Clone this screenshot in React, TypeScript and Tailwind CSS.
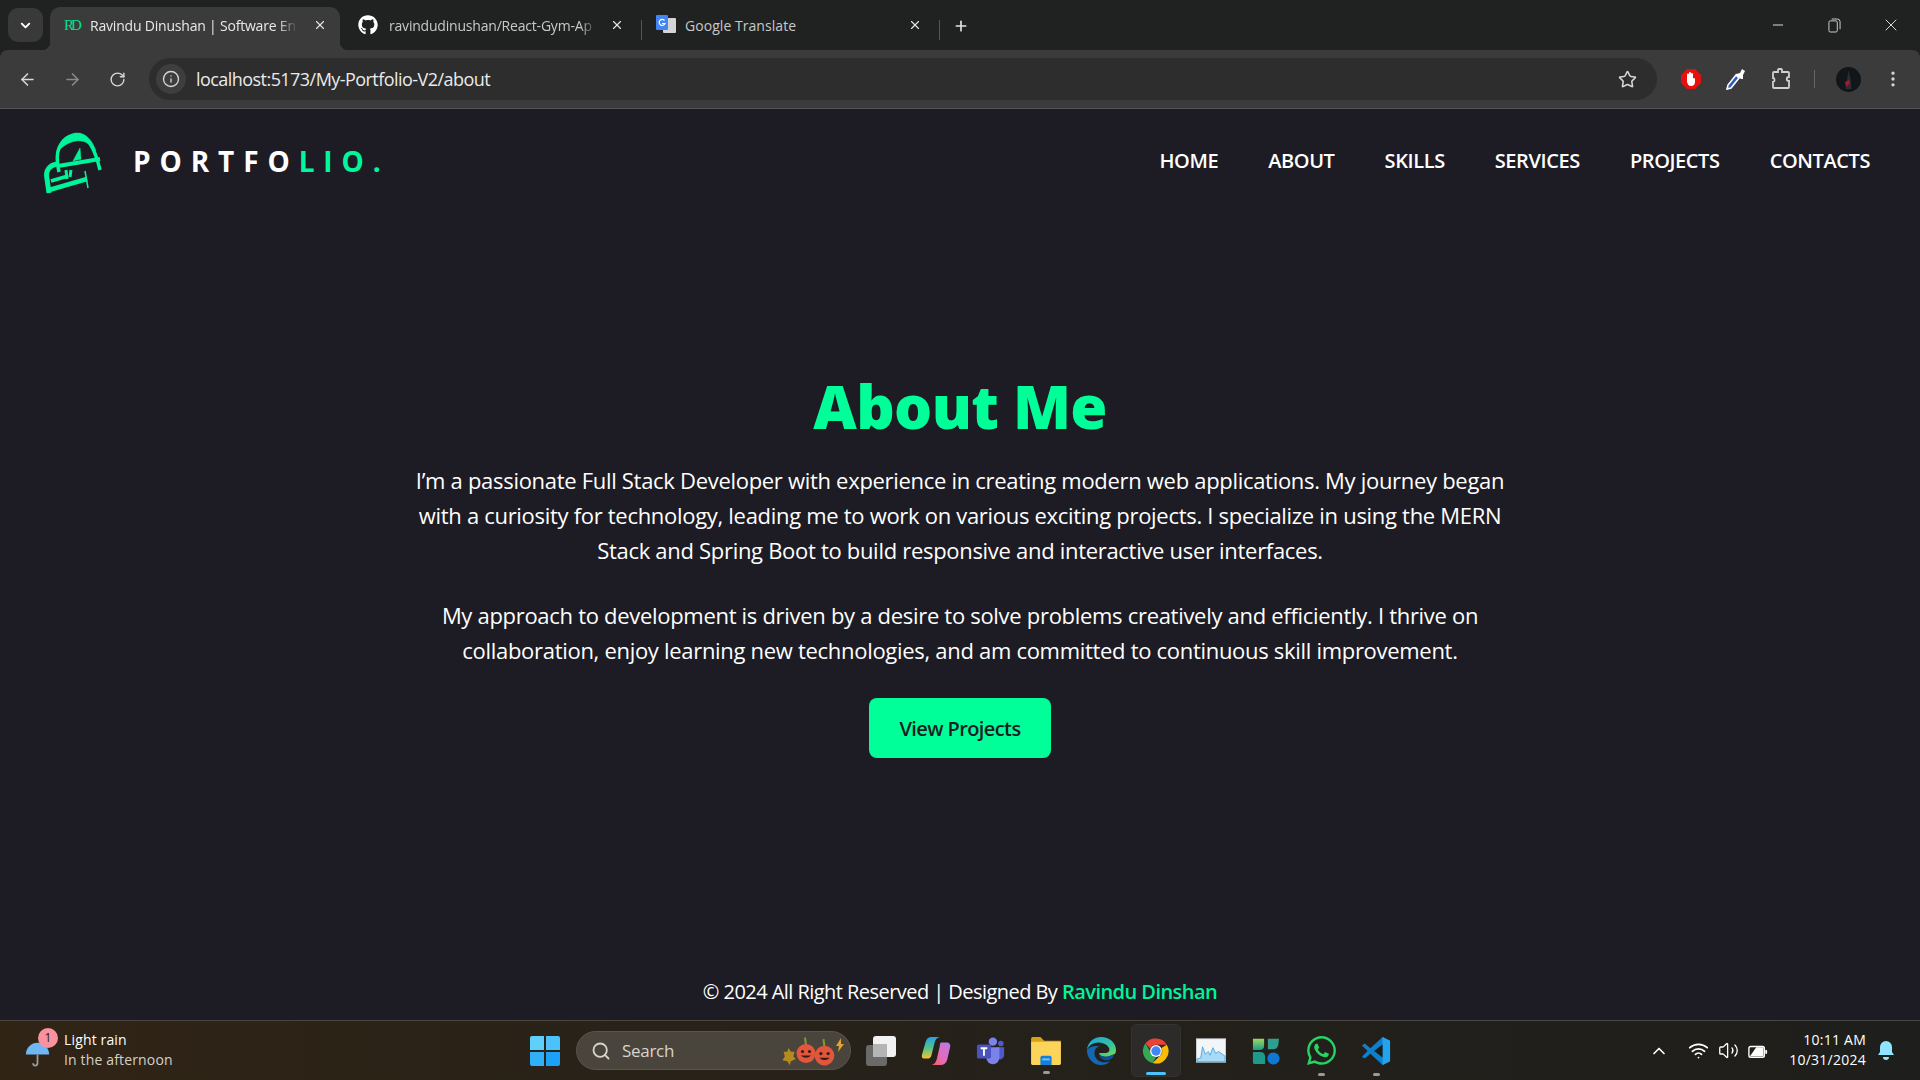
import { ArrowLeft, ArrowRight, ChevronDown, ChevronUp, EllipsisVertical, Info, Minus, Plus, RotateCw, Search, Star, Volume2, Wifi, X } from "lucide-react";
import { FaGithub, FaWhatsapp } from "react-icons/fa";

const navLinks = ["HOME", "ABOUT", "SKILLS", "SERVICES", "PROJECTS", "CONTACTS"];

function LogoMark() {
    return (
        <svg viewBox="0 0 90 85" className="w-[90px] h-[85px] translate-y-[2px]" fill="none" stroke="#00f59b" strokeLinecap="butt">
            <path d="M29 51C27 42 26 34 29 27C33 18 40 14 47 14C58 14 65 28 70 49" strokeWidth="3.500" />
            <path d="M28 30C32 18 40 12 47 12C56 12 62 19 66 30C59 21 52 19 46 20C39 21 33 25 28 30z" fill="#00f59b" strokeWidth="0.500" />
            <path d="M28 45L70 38" strokeWidth="4" />
            <path d="M50 27L51 38L43 40z" fill="#00f59b" strokeWidth="0.500" />
            <path d="M36 49L37 58M41 49L40 56" strokeWidth="3" />
            <path d="M27 43C20 44 15 49 17 58L19 72" strokeWidth="5" />
            <path d="M19 69L57 58" strokeWidth="4.500" />
            <path d="M21 60L38 55" strokeWidth="3.500" />
            <path d="M55 50L58 67" strokeWidth="1.500" />
        </svg>
    );
}

function ChromeIcon() {
    return (
        <svg viewBox="0 0 48 48" className="w-[30px] h-[30px]">
            <path d="M24 4a20 20 0 0 1 17.3 10H24a10 10 0 0 0-9.3 6.3L7.2 11.6A20 20 0 0 1 24 4z" fill="#ea4335" />
            <path d="M7.2 11.6l8.6 15A10 10 0 0 0 24 34l-5.3 9.3A20 20 0 0 1 7.2 11.6z" fill="#34a853" />
            <path d="M41.3 14A20 20 0 0 1 18.700 43.300L32.700 29A10 10 0 0 0 32.600 19z" fill="#fbbc04" />
            <circle cx="24" cy="24" r="9.500" fill="#fff" />
            <circle cx="24" cy="24" r="7.500" fill="#4285f4" />
        </svg>
    );
}

function EdgeIcon() {
    return (
        <svg viewBox="0 0 32 32" className="w-[30px] h-[30px]">
            <defs>
                <linearGradient id="edgeTop" x1="0" y1="0" x2="1" y2="1">
                    <stop offset="0" stopColor="#1aa5e0" />
                    <stop offset="0.6" stopColor="#35c1a0" />
                    <stop offset="1" stopColor="#7fdc4e" />
                </linearGradient>
            </defs>
            <path d="M16 1C8 1 1.500 7 1 15c2-5 7-8 12-8 7 0 12 4 12 8 0 2-2 3-4 3h-7c0 3 4 4 8 4 3 0 6-1 9-3 .7-1.500 1-3 1-4C32 7 25 1 16 1z" fill="url(#edgeTop)" />
            <path d="M1 15c-.3 8 6 16 15 16 4 0 7-1 10-4-2 1-4 1-6 1-7 0-11-5-11-10 0-3 2-6 5-7-6-1-11 1-13 4z" fill="#1468b3" />
            <path d="M14 18c0 5 4 8 8 8 2 0 3-.5 4-1 2-1 4-3 4-6-3 2-6 3-9 3-4 0-7-2-7-4z" fill="#0c4f94" />
        </svg>
    );
}

function TeamsIcon() {
    return (
        <svg viewBox="0 0 32 32" className="w-[30px] h-[30px]">
            <circle cx="18" cy="6" r="4.500" fill="#7b83eb" />
            <circle cx="26.500" cy="8" r="3" fill="#5059c9" />
            <path d="M22 12h8v9a5 5 0 0 1-8 3z" fill="#5059c9" />
            <path d="M11 12h14v11a7 7 0 0 1-14 0z" fill="#7b83eb" />
            <rect x="1" y="9" width="15" height="15" rx="2" fill="#4b53bc" />
            <path d="M5 13h7M8.500 13v8" stroke="#fff" strokeWidth="2" />
        </svg>
    );
}

function CopilotIcon() {
    return (
        <svg viewBox="0 0 32 32" className="w-[30px] h-[30px]">
            <defs>
                <linearGradient id="copilotLeft" x1="0" y1="0" x2="0" y2="1">
                    <stop offset="0" stopColor="#2a9ee8" />
                    <stop offset="0.5" stopColor="#4fc58a" />
                    <stop offset="1" stopColor="#f5c431" />
                </linearGradient>
                <linearGradient id="copilotRight" x1="1" y1="0" x2="0" y2="1">
                    <stop offset="0" stopColor="#b57ce6" />
                    <stop offset="0.6" stopColor="#e86ab6" />
                    <stop offset="1" stopColor="#f0613c" />
                </linearGradient>
            </defs>
            <path d="M11 1h9c-4 1-5 4-6 8l-3 12c-.5 2-2 3-4 3H3C1 24 .5 22 1 20L5 6c1-3 3-5 6-5z" fill="url(#copilotLeft)" />
            <path d="M21 7h6c3 0 5 2 4 5l-3 13c-1 4-4 6-7 6H10c4 0 6-3 7-7l3-13c.2-2 .5-3 1-4z" fill="url(#copilotRight)" />
        </svg>
    );
}

function FolderIcon() {
    return (
        <svg viewBox="0 0 32 30" className="w-[30px] h-[28px]">
            <path d="M0 2a2 2 0 0 1 2-2h8l4 4h18v4H0z" fill="#d9a00f" />
            <rect y="5" width="32" height="25" rx="1.500" fill="#fcd45a" />
            <path d="M10 30v-8a2 2 0 0 1 2-2h8a2 2 0 0 1 2 2v8z" fill="#1480d8" />
            <rect x="12" y="23" width="8" height="2" fill="#7cc3f5" />
        </svg>
    );
}

function VsCodeIcon() {
    return (
        <svg viewBox="0 0 32 32" className="w-[30px] h-[32px]">
            <path d="M23 1l8 4v22l-8 4L10 19l-6 5-3-2 6-6-6-6 3-2 6 5z" fill="#0e7fcc" />
            <path d="M23 1l8 4v22l-8 4z" fill="#25a4ee" />
            <path d="M23 9l-9 7 9 7z" fill="#1c1c1a" />
        </svg>
    );
}

function SecureGrid() {
    return (
        <svg viewBox="0 0 30 30" className="w-[28px] h-[28px]">
            <defs>
                <linearGradient id="leafGreen" x1="0" y1="0" x2="0" y2="1">
                    <stop offset="0" stopColor="#9bd862" />
                    <stop offset="1" stopColor="#1f9a8a" />
                </linearGradient>
            </defs>
            <path d="M1 2h12v7c0 3-2 5-5 5H1z" fill="url(#leafGreen)" />
            <path d="M17 2h12l-1 7c-1 3-3 4-5 4h-6z" fill="#2f9e8f" />
            <path d="M1 16h8c3 0 5 2 5 5v8H3a2 2 0 0 1-2-2z" fill="#1f9a8a" />
            <circle cx="23" cy="23" r="6.500" fill="#0f78d4" />
        </svg>
    );
}

function MonitorIcon() {
    return (
        <svg viewBox="0 0 32 26" className="w-[30px] h-[25px]">
            <rect width="32" height="26" fill="#c8ccd0" />
            <rect x="1" y="1" width="30" height="24" fill="#f2f6f8" />
            <path d="M1 22l4-1 2-12 3 8 3-3 2 4 3-8 3 6 3-2 7 5v6H1z" fill="#a6daf5" stroke="#3a9ad6" strokeWidth="0.800" />
        </svg>
    );
}

function Pumpkin({ size }: { size: string }) {
    return (
        <svg viewBox="0 0 20 26" className={size}>
            <path d="M10 8L9 0" stroke="#7c9a32" strokeWidth="2" />
            <ellipse cx="10" cy="16" rx="9.500" ry="9.500" fill="#e2563c" />
            <circle cx="6.500" cy="14" r="1.600" fill="#3a1b14" />
            <circle cx="13.500" cy="14" r="1.600" fill="#3a1b14" />
            <path d="M5 18c3 3 7 3 10 0z" fill="#3a1b14" />
        </svg>
    );
}

function TabClose() {
    return <X size={14} strokeWidth={2} className="text-[#e3e3e3]" />;
}

function ChromeBar() {
    return (
        <div className="shrink-0 bg-[#202221] font-['Open_Sans',sans-serif]">
            <div className="h-[50px] flex items-end relative text-[14px] tracking-[-0.2px]">
                <div className="absolute left-[8px] top-[8px] w-[35px] h-[34px] rounded-[10px] bg-[#383938] flex items-center justify-center">
                    <ChevronDown size={15} strokeWidth={3} className="text-white" />
                </div>
                <div className="relative ml-[50px] w-[290px] h-[43px] rounded-t-[10px] bg-[#3b3b3b] flex items-center pl-[14px] text-[#e8e8e8] pb-[7px]">
                    <span className="absolute -left-[8px] bottom-0 w-[8px] h-[8px] bg-[radial-gradient(circle_at_0_0,#202221_8px,#3b3b3b_8.500px)]" />
                    <span className="absolute -right-[8px] bottom-0 w-[8px] h-[8px] bg-[radial-gradient(circle_at_100%_0,#202221_8px,#3b3b3b_8.500px)]" />
                    <span className="w-[14px] text-[#00e08c] text-[15px] leading-none tracking-[-3px] font-['Liberation_Serif',serif]">RD</span>
                    <span className="ml-[12px] w-[208px] overflow-hidden whitespace-nowrap [mask-image:linear-gradient(to_right,black_90%,transparent)]">Ravindu Dinushan | Software En</span>
                    <span className="ml-[15px]"><TabClose /></span>
                </div>
                <div className="w-[301px] h-[43px] flex items-center pl-[18px] text-[#c8c8c8] pb-[7px]">
                    <FaGithub size={20} className="text-white shrink-0" />
                    <span className="ml-[11px] w-[208px] overflow-hidden whitespace-nowrap [mask-image:linear-gradient(to_right,black_92%,transparent)]">ravindudinushan/React-Gym-Ap</span>
                    <span className="ml-[13px]"><TabClose /></span>
                </div>
                <div className="w-[1px] h-[20px] bg-[#555] mb-[10px]" />
                <div className="w-[297px] h-[43px] flex items-center pl-[14px] text-[#c8c8c8] pb-[7px]">
                    <svg viewBox="0 0 20 20" className="w-[20px] h-[20px] shrink-0">
                        <rect x="7" y="3" width="13" height="15" rx="1" fill="#d5d5d5" />
                        <rect width="12" height="15" rx="1" fill="#4285f4" />
                        <path d="M8.500 5.500a3 3 0 1 0 .5 3H6" stroke="#fff" strokeWidth="1.200" fill="none" />
                    </svg>
                    <span className="ml-[9px] w-[210px] whitespace-nowrap tracking-[0.05px]">Google Translate</span>
                    <span className="ml-[13px]"><TabClose /></span>
                </div>
                <div className="w-[1px] h-[20px] bg-[#555] mb-[10px]" />
                <div className="ml-[13px] mb-[16px]"><Plus size={16} strokeWidth={2.500} className="text-[#e3e3e3]" /></div>
                <div className="ml-auto flex items-center h-full text-[#d8d8d8]">
                    <div className="w-[56px] flex justify-center"><Minus size={16} strokeWidth={1.500} /></div>
                    <div className="w-[56px] flex justify-center">
                        <svg viewBox="0 0 14 16" className="w-[13px] h-[15px]" fill="none" stroke="currentColor">
                            <rect x="1" y="3" width="9" height="12" rx="1.500" />
                            <path d="M4 1h6a3 3 0 0 1 3 3v8" />
                        </svg>
                    </div>
                    <div className="w-[58px] flex justify-center"><X size={20} strokeWidth={1.200} /></div>
                </div>
            </div>
            <div className="h-[59px] bg-[#3b3b3b] border-b border-[#555] rounded-t-[8px] flex items-center text-[#d6d6d6]">
                <ArrowLeft size={19} className="ml-[18px]" />
                <ArrowRight size={19} className="ml-[26px] text-[#8a8a8a]" />
                <RotateCw size={17} className="ml-[27px]" />
                <div className="ml-[23px] w-[1508px] h-[42px] rounded-full bg-[#2d2d2d] flex items-center pl-[7px] pr-[20px]">
                    <div className="w-[30px] h-[30px] rounded-full bg-[#3e3e3e] flex items-center justify-center">
                        <Info size={18} strokeWidth={1.800} />
                    </div>
                    <span className="ml-[10px] text-[18px] text-[#eaeaea] tracking-[-0.55px]">localhost:5173/My-Portfolio-V2/about</span>
                    <Star size={19} className="ml-auto" />
                </div>
                <svg viewBox="0 0 20 20" className="ml-[24px] w-[20px] h-[20px]">
                    <path d="M6 0h8l6 6v8l-6 6H6l-6-6V6z" fill="#e8100c" />
                    <path d="M6 9V5.500a1 1 0 0 1 2 0V4a1 1 0 0 1 2 0v1a1 1 0 0 1 2 0v5a1 1 0 0 1 2 0v3c0 2.500-1.500 4-4 4s-3-1.500-4-4z" fill="#fff" />
                </svg>
                <svg viewBox="0 0 20 22" className="ml-[25px] w-[20px] h-[22px]">
                    <path d="M10 7L2 17l-1 4 4-1 8-10z" fill="#2f58c9" stroke="#fff" strokeWidth="1.600" />
                    <path d="M10 6l4-1 2-4 3 2-2 4 0 4-2 0-5-4z" fill="#fff" />
                </svg>
                <svg viewBox="0 0 20 22" className="ml-[25px] w-[20px] h-[22px]" fill="none" stroke="#d0d0d0" strokeWidth="1.800">
                    <path d="M7 4V2a1 1 0 0 1 1-1h2a1 1 0 0 1 1 1v2h6a1 1 0 0 1 1 1v4c-3 0-3 4 0 4v6a1 1 0 0 1-1 1H3a1 1 0 0 1-1-1v-5c2 0 2-4 0-4V5a1 1 0 0 1 1-1z" />
                </svg>
                <div className="ml-[23px] w-[1px] h-[18px] bg-[#666]" />
                <svg viewBox="0 0 25 25" className="ml-[21px] w-[25px] h-[25px]">
                    <circle cx="12.500" cy="12.500" r="12.500" fill="#10161a" />
                    <path d="M12.500 3l2 9 1 10h-6l1-6z" fill="#2c2e34" />
                    <path d="M9 15l4-2 1 3-4 4z" fill="#a01c28" />
                </svg>
                <EllipsisVertical size={20} className="ml-[22px]" />
            </div>
        </div>
    );
}

function Taskbar() {
    return (
        <div className="h-[60px] shrink-0 border-t border-[#4a4740] bg-gradient-to-r from-[#302415] via-[#25211a] to-[#1e1e1c] flex items-center relative font-['Open_Sans',sans-serif] text-[14px] tracking-[0.15px] text-white">
            <div className="w-[38px] ml-[25px] relative h-full flex items-center">
                <svg viewBox="0 0 28 30" className="mt-[6px] w-[25px] h-[27px]" fill="none">
                    <path d="M1 16a13 13 0 0 1 26 0z" fill="#6fb8f5" />
                    <path d="M14 16v10a2.500 2.500 0 0 1-5 0" stroke="#9b9b9b" strokeWidth="2" />
                </svg>
                <span className="absolute left-[13px] top-[7px] w-[20px] h-[20px] rounded-full bg-[#f9929e] text-[#2a1a14] text-[12px] flex items-center justify-center">1</span>
            </div>
            <div className="ml-[1px] w-[466px] leading-[20px] -translate-y-[1px]">
                <div>Light rain</div>
                <div className="text-[#d4d0c8]">In the afternoon</div>
            </div>
            <div className="w-[30px] h-[30px] grid grid-cols-2 gap-[2px] shrink-0">
                <div className="bg-[#5fd0fb] rounded-tl-[2px]" />
                <div className="bg-[#4bc3fa] rounded-tr-[2px]" />
                <div className="bg-[#2fb0f8] rounded-bl-[2px]" />
                <div className="bg-[#1ba2f6] rounded-br-[2px]" />
            </div>
            <div className="ml-[16px] w-[275px] h-[39px] rounded-full bg-[#4a453c] border border-[#5a554c] flex items-center pl-[14px] text-[#d8d4cc] text-[17px] tracking-[-0.3px]">
                <Search size={20} strokeWidth={2.200} />
                <span className="ml-[11px]">Search</span>
                <div className="ml-auto mr-[6px] flex items-end">
                    <svg viewBox="0 0 12 14" className="w-[15px] h-[17px] mb-[1px]"><path d="M6 0l2 3 3 0-1 4 2 2-4 2-1 3-2-3-4-1 2-3-1-4 3 0z" fill="#b58a1e" /></svg>
                    <Pumpkin size="w-[20px] h-[31px]" />
                    <Pumpkin size="w-[23px] h-[27px] -ml-[3px]" />
                    <svg viewBox="0 0 8 14" className="w-[8px] h-[16px] mb-[13px]"><path d="M5 0L0 8h3l-1 6 6-8H5z" fill="#e0a526" /></svg>
                </div>
            </div>
            <div className="ml-[2.500px] flex items-center">
                <div className="w-[55px] flex justify-center">
                    <div className="relative w-[30px] h-[30px]">
                        <div className="absolute left-0 bottom-0 w-[21px] h-[21px] rounded-[3px] bg-[#6a6a6a]" />
                        <div className="absolute right-0 top-0 w-[23px] h-[21px] rounded-[3px] bg-[#f2f2f2]" />
                        <div className="absolute left-[7px] top-[8px] w-[14px] h-[13px] bg-[#b5b5b5]" />
                    </div>
                </div>
                <div className="w-[55px] flex justify-center"><CopilotIcon /></div>
                <div className="w-[55px] flex justify-center"><TeamsIcon /></div>
                <div className="w-[55px] flex justify-center relative">
                    <FolderIcon />
                    <span className="absolute -bottom-[9px] w-[7px] h-[3px] rounded-full bg-[#9a9a9a]" />
                </div>
                <div className="w-[55px] flex justify-center"><EdgeIcon /></div>
                <div className="w-[50px] h-[53px] mx-[2.500px] flex justify-center items-center rounded-[5px] bg-[#2c2b29] border border-[#33322f] relative">
                    <ChromeIcon />
                    <span className="absolute bottom-[1px] w-[20px] h-[3px] rounded-full bg-[#4cc2ff]" />
                </div>
                <div className="w-[55px] flex justify-center"><MonitorIcon /></div>
                <div className="w-[55px] flex justify-center"><SecureGrid /></div>
                <div className="w-[55px] flex justify-center relative">
                    <FaWhatsapp size={33} className="text-[#25d366]" />
                    <span className="absolute -bottom-[9px] w-[7px] h-[3px] rounded-full bg-[#9a9a9a]" />
                </div>
                <div className="w-[55px] flex justify-center relative">
                    <VsCodeIcon />
                    <span className="absolute -bottom-[9px] w-[7px] h-[3px] rounded-full bg-[#9a9a9a]" />
                </div>
            </div>
            <div className="ml-auto flex items-center pr-[26px]">
                <ChevronUp size={20} strokeWidth={2} />
                <Wifi size={21} className="ml-[19px]" />
                <Volume2 size={21} strokeWidth={1.500} className="ml-[9px]" />
                <svg viewBox="0 0 22 18" className="ml-[9px] w-[20px] h-[18px]" fill="none" stroke="#fff" strokeWidth="1.500">
                    <rect x="1" y="4" width="17" height="12" rx="2" />
                    <path d="M20 8v4" strokeWidth="2" />
                    <path d="M2 15L9 5h8v10z" fill="#fff" stroke="none" />
                </svg>
                <div className="ml-[13px] w-[85px] text-right leading-[20px] tracking-[0.25px] -translate-y-[1px]">
                    <div>10:11 AM</div>
                    <div>10/31/2024</div>
                </div>
                <svg viewBox="0 0 16 19" className="ml-[12px] w-[16px] h-[19px]" fill="#8fe4ff">
                    <path d="M8 0a6 6 0 0 1 6 6v5l2 3H0l2-3V6a6 6 0 0 1 6-6z" />
                    <path d="M5 16h6a3 3 0 0 1-6 0z" />
                </svg>
            </div>
        </div>
    );
}

export default function App() {
    return (
        <div className="h-screen flex flex-col overflow-hidden bg-[#1d1c24]">
            <ChromeBar />

            <main className="flex-1 flex flex-col text-white font-['Open_Sans',sans-serif]">
                <header className="flex items-center justify-between pl-[30px] pr-[50px] h-[84px] mt-[10px] mb-[-10px]">
                    <div className="flex items-center">
                        <LogoMark />
                        <span className="ml-[13px] text-[28px] font-bold tracking-[8.900px]">
                            PORTFO<span className="text-[#00f79b]">LIO.</span>
                        </span>
                    </div>
                    <nav className="flex gap-[50px] text-[20px] font-semibold tracking-[-0.4px]">
                        {navLinks.map((link) => (
                            <a key={link}>{link}</a>
                        ))}
                    </nav>
                </header>

                <section className="flex flex-col items-center text-center mt-[177px]">
                    <h1 className="text-[60px] leading-[72px] font-extrabold text-[#00ff99] tracking-[-0.7px]">About Me</h1>
                    <div className="w-[1100px] mt-[21px] text-[22px] leading-[35px] tracking-[-0.3px]">
                        <p>
                            I’m a passionate Full Stack Developer with experience in creating modern web applications. My journey began with a curiosity for technology, leading me to work on various exciting projects. I specialize in using the MERN Stack and Spring Boot to build responsive and interactive user interfaces.
                        </p>
                        <p className="mt-[30px] px-[20px]">
                            My approach to development is driven by a desire to solve problems creatively and efficiently. I thrive on collaboration, enjoy learning new technologies, and am committed to continuous skill improvement.
                        </p>
                    </div>
                    <button className="mt-[30px] w-[182px] h-[60px] pt-[1px] rounded-lg bg-[#00ff99] text-[#1c1c24] text-[20px] font-semibold tracking-[-0.6px]">
                        View Projects
                    </button>
                </section>

                <footer className="mt-auto mb-[14px] text-center text-[20px] leading-[28px] tracking-[-0.55px]">
                    © 2024 All Right Reserved | Designed By <span className="text-[#00f59b] font-semibold">Ravindu Dinshan</span>
                </footer>
            </main>

            <Taskbar />
        </div>
    );
}
